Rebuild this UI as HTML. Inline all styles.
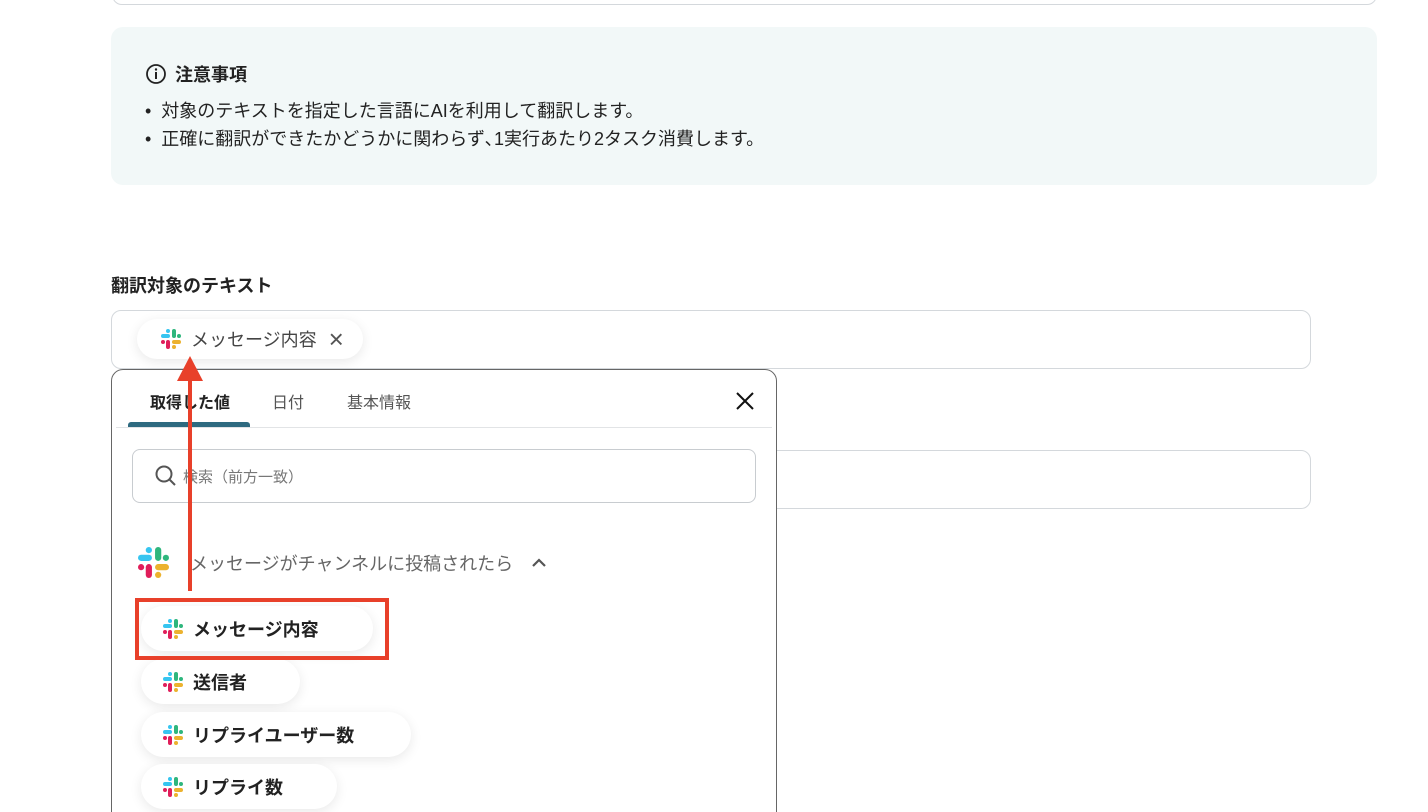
<!DOCTYPE html>
<html><head><meta charset="utf-8"><style>
*{box-sizing:border-box;margin:0;padding:0}
html,body{width:1428px;height:812px;overflow:hidden}
body{background:#fff;font-family:"Liberation Sans","Noto Sans CJK JP",sans-serif;color:#222;position:relative}
.a{position:absolute}
.chip{position:absolute;background:#fff;border-radius:24px;box-shadow:0 3px 12px rgba(0,0,0,.09);display:flex;align-items:center;font-weight:bold;font-size:18px;color:#222}
.chip svg{margin:0 10px 0 22px}
</style></head><body>
<svg width="0" height="0" style="position:absolute"><defs>
<g id="sl">
<rect x="0" y="5" width="9" height="4" rx="2" fill="#36c5f0"/><rect x="5" y="0" width="4" height="4" rx="2" fill="#36c5f0"/>
<rect x="11" y="0" width="4" height="9" rx="2" fill="#2eb67d"/><rect x="16" y="5" width="4" height="4" rx="2" fill="#2eb67d"/>
<rect x="5" y="11" width="4" height="9" rx="2" fill="#e01e5a"/><rect x="0" y="11" width="4" height="4" rx="2" fill="#e01e5a"/>
<rect x="11" y="11" width="9" height="4" rx="2" fill="#ecb22e"/><rect x="11" y="16" width="4" height="4" rx="2" fill="#ecb22e"/>
</g></defs></svg>
<div class="a" style="left:112px;top:-20px;width:1265px;height:25px;border:1px solid #d4d8dc;border-radius:10px"></div>
<div class="a" style="left:111px;top:27px;width:1266px;height:158px;background:#f2f8f8;border-radius:12px"></div>
<svg class="a" style="left:145px;top:63px" width="22" height="22" viewBox="0 0 22 22"><circle cx="11" cy="11" r="9" fill="none" stroke="#222" stroke-width="1.8"/><rect x="10" y="9" width="2" height="7" fill="#222"/><circle cx="11" cy="6.5" r="1.2" fill="#222"/></svg>
<div class="a" style="left:175px;top:61px;font-size:18px;font-weight:bold">注意事項</div>
<div class="a" style="left:145px;top:97px;font-size:18px;line-height:28px">• &nbsp;対象のテキストを指定した言語にAIを利用して翻訳します。<br>• &nbsp;正確に翻訳ができたかどうかに関わらず､1実行あたり2タスク消費します。</div>
<div class="a" style="left:111px;top:272px;font-size:18px;font-weight:bold">翻訳対象のテキスト</div>
<div class="a" style="left:111px;top:310px;width:1200px;height:59px;border:1px solid #d4d8dc;border-radius:10px"></div>
<div class="a" style="left:111px;top:450px;width:1200px;height:59px;border:1px solid #d4d8dc;border-radius:10px"></div>
<div class="chip" style="left:137px;top:319px;width:226px;height:40px;font-weight:normal;font-size:18px;color:#444"><svg width="20" height="20" viewBox="0 0 20 20" style="margin-left:24px"><use href="#sl"/></svg>メッセージ内容<span style="margin-left:12px;font-size:26px;font-weight:300;color:#555">×</span></div>
<div class="a" style="left:111px;top:369px;width:666px;height:470px;background:#fff;border:1px solid #666;border-radius:12px"></div>
<div class="a" style="left:150px;top:389px;font-size:16px;font-weight:bold">取得した値</div>
<div class="a" style="left:272px;top:389px;font-size:16px;color:#555">日付</div>
<div class="a" style="left:347px;top:389px;font-size:16px;color:#555">基本情報</div>
<div class="a" style="left:128px;top:422px;width:122px;height:5px;background:#2e6a80;border-radius:3px 3px 0 0"></div>
<div class="a" style="left:116px;top:427px;width:656px;height:1px;background:#e2e4e6"></div>
<svg class="a" style="left:735px;top:391px" width="20" height="20" viewBox="0 0 20 20"><path d="M2 2L18 18M18 2L2 18" stroke="#111" stroke-width="2"/></svg>
<div class="a" style="left:132px;top:449px;width:624px;height:54px;border:1px solid #c8ccd0;border-radius:8px"></div>
<svg class="a" style="left:154px;top:464px" width="24" height="24" viewBox="0 0 24 24"><circle cx="10" cy="10" r="7.5" fill="none" stroke="#555" stroke-width="2"/><path d="M15.5 15.5L21 21" stroke="#555" stroke-width="2"/></svg>
<div class="a" style="left:183px;top:466px;font-size:15px;color:#777">検索（前方一致）</div>
<svg class="a" style="left:138px;top:547px" width="31" height="31" viewBox="0 0 20 20"><use href="#sl"/></svg>
<div class="a" style="left:190px;top:550px;font-size:18px;color:#666">メッセージがチャンネルに投稿されたら</div>
<svg class="a" style="left:531px;top:557px" width="16" height="12" viewBox="0 0 16 12"><path d="M2 9L8 3L14 9" fill="none" stroke="#555" stroke-width="2.2"/></svg>
<div class="chip" style="left:141px;top:606px;width:232px;height:45px"><svg width="20" height="20" viewBox="0 0 20 20"><use href="#sl"/></svg>メッセージ内容</div>
<div class="chip" style="left:141px;top:659px;width:159px;height:45px"><svg width="20" height="20" viewBox="0 0 20 20"><use href="#sl"/></svg>送信者</div>
<div class="chip" style="left:141px;top:712px;width:270px;height:45px"><svg width="20" height="20" viewBox="0 0 20 20"><use href="#sl"/></svg>リプライユーザー数</div>
<div class="chip" style="left:141px;top:764px;width:196px;height:45px"><svg width="20" height="20" viewBox="0 0 20 20"><use href="#sl"/></svg>リプライ数</div>
<div class="a" style="left:135px;top:598px;width:254px;height:62px;border:4px solid #e8402a"></div>
<div class="a" style="left:188px;top:378px;width:4px;height:213px;background:#e8402a"></div>
<svg class="a" style="left:177px;top:356px" width="26" height="25" viewBox="0 0 26 25"><path d="M13 0L26 25H0Z" fill="#e8402a"/></svg>
</body></html>
